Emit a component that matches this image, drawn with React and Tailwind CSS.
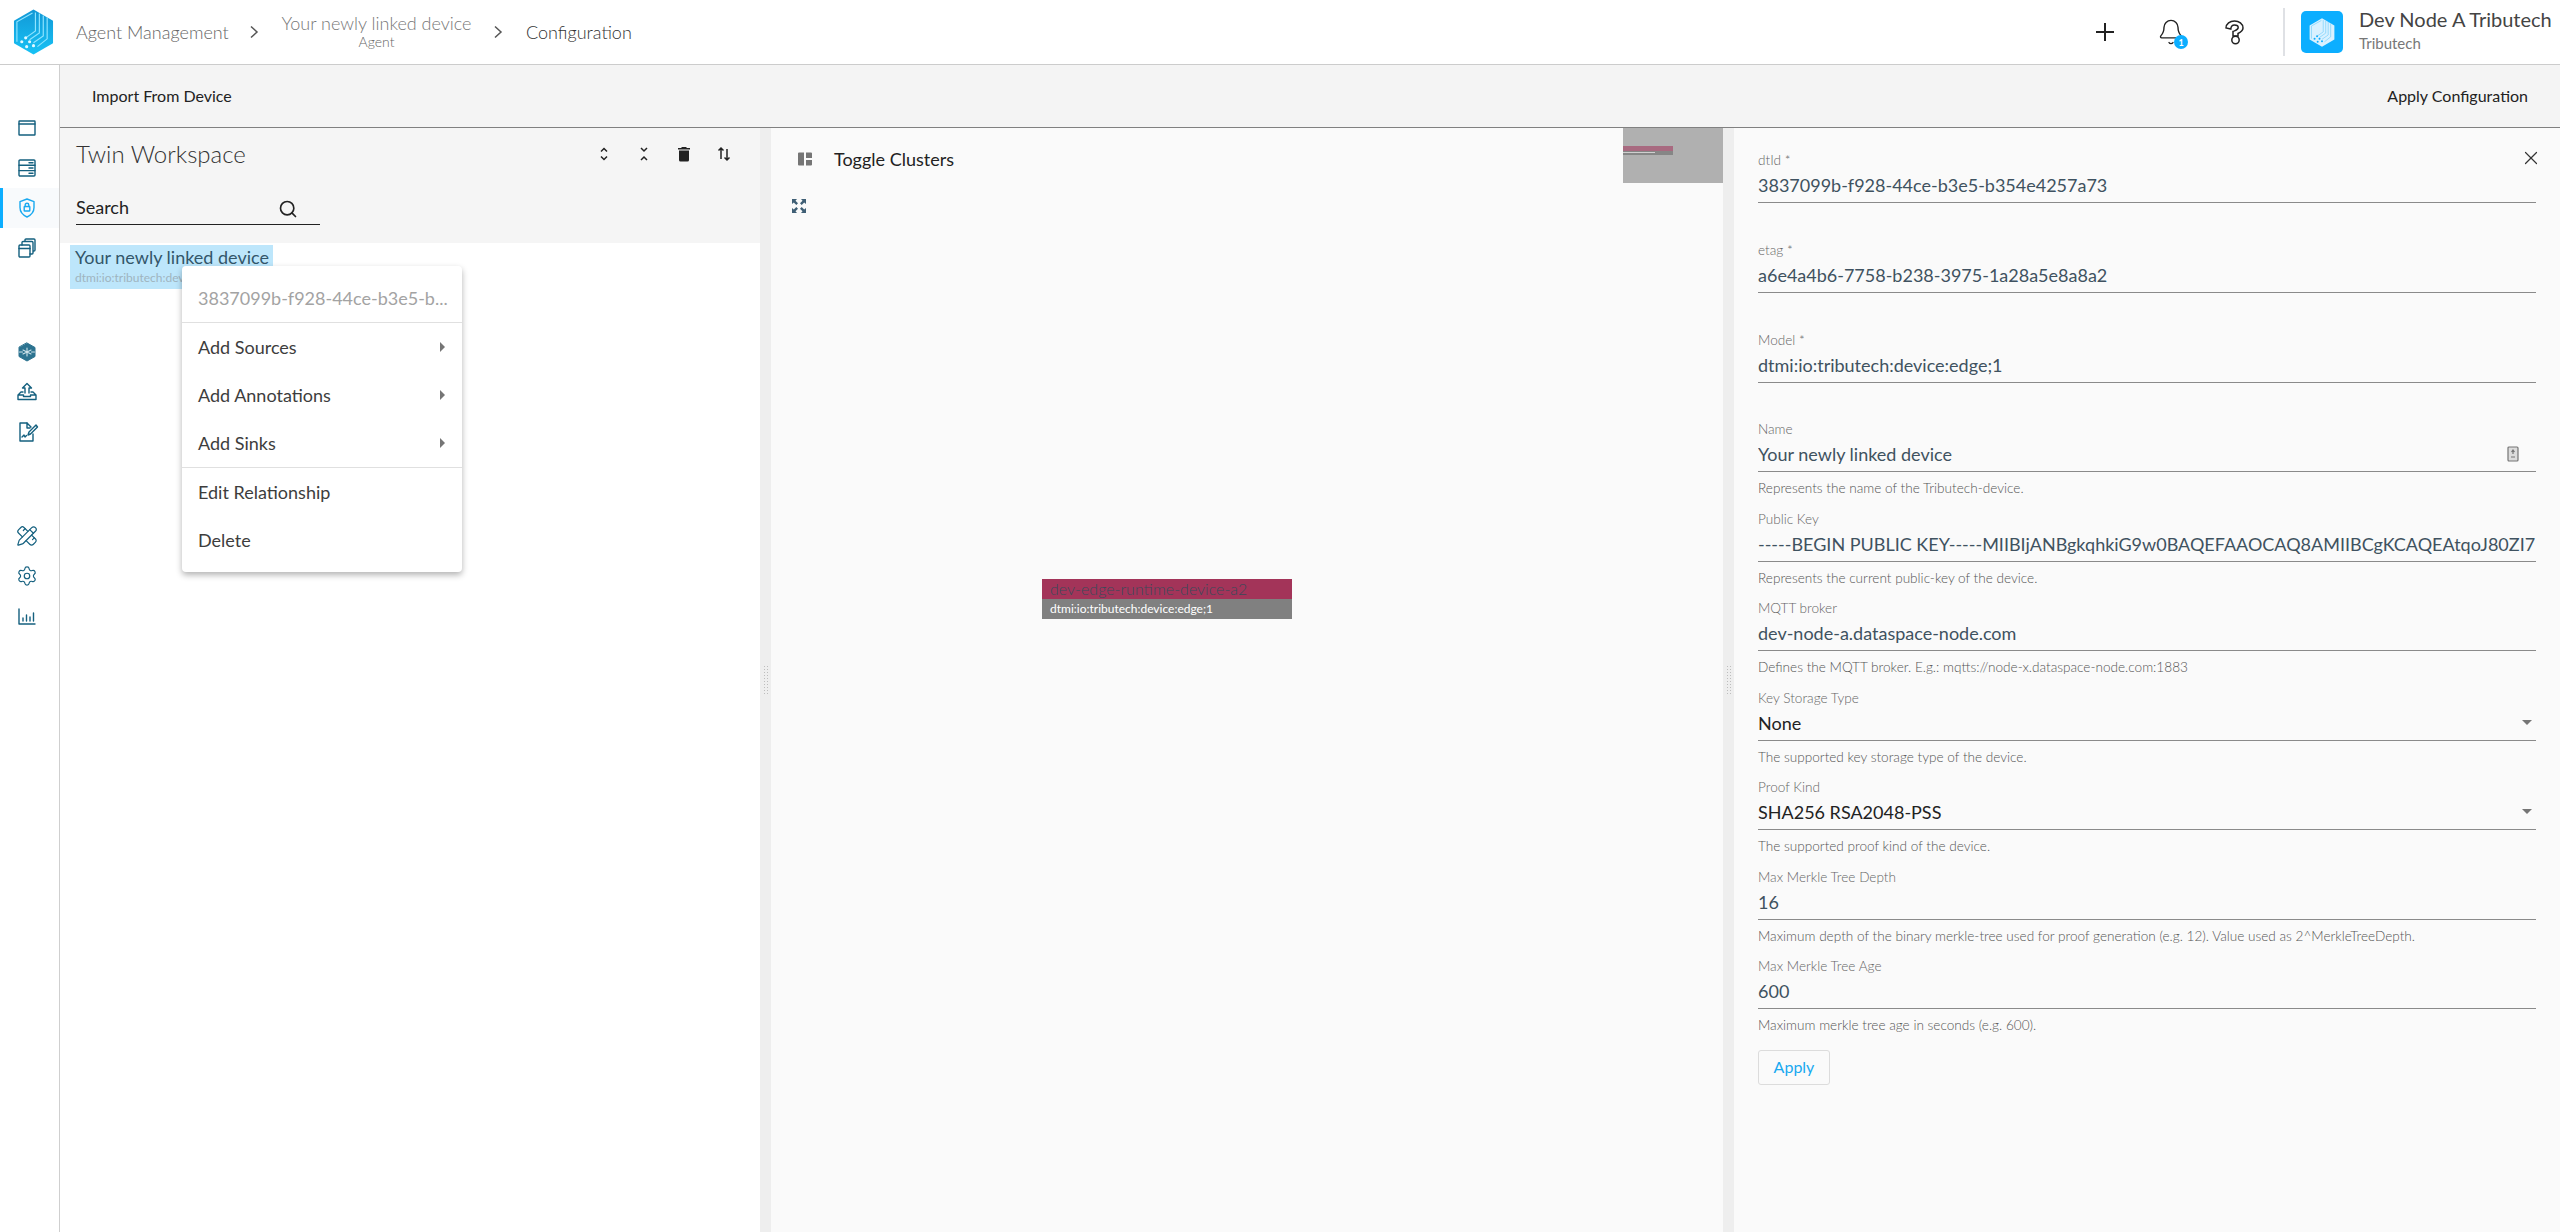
import React from "react";
import { PencilRuler, Settings, Bell, X, Search } from "lucide-react";

const S = (p) => <svg width="24" height="24" viewBox="0 0 24 24" fill="none" stroke="currentColor" strokeWidth="1.4" strokeLinecap="round" strokeLinejoin="round" {...p} />;

const Logo = ({ light }) => (
  <svg viewBox="0 0 42 46" className={light ? "w-[26px] h-[29px]" : "w-[41px] h-[46px]"}>
    <defs>
      <linearGradient id="lg" x1="0" y1="0" x2="0" y2="1">
        <stop offset="0" stopColor="#1298d6" />
        <stop offset="1" stopColor="#18c2f5" />
      </linearGradient>
    </defs>
    <path d="M21 0 41 11.500V34.500L21 46 1 34.500V11.500Z" fill={light ? "#d9f1ff" : "url(#lg)"} />
    <g fill="none" stroke={light ? "#7fd2fb" : "#8fe4ff"} strokeWidth="1.2">
      <path d="M20 3.500 4 12.500V33" />
      <path d="M23 3V22L13 29" />
      <path d="M27 4V24L17 31" />
      <path d="M31 6V27L21 34" />
      <path d="M35 8V30L25 38" />
    </g>
    <g fill={light ? "#0caeff" : "#e4f8ff"}>
      <circle cx="13" cy="29" r="1.600" />
      <circle cx="17" cy="33" r="1.600" />
      <circle cx="9" cy="33" r="1.600" />
      <circle cx="21" cy="37" r="1.600" />
      <circle cx="14" cy="38" r="1.600" />
    </g>
  </svg>
);

const navGroups = [
  [
    <S key="a"><rect x="4" y="5" width="16" height="14" rx="0.5" /><path d="M4 8h16" /></S>,
    <S key="b"><rect x="4" y="4" width="16" height="16" rx="1" /><path d="M4 9.300h16M4 14.600h16M14 6.700h4M14 12h4M14 17.300h4" /></S>,
    <S key="c"><path d="M12 3l7 2.600v6c0 4.400-3 7.600-7 9.400-4-1.800-7-5-7-9.400v-6z" /><rect x="9.200" y="10.500" width="5.600" height="4.500" rx="0.600" /><path d="M10.200 10.500V9a1.800 1.800 0 0 1 3.600 0v1.500" /></S>,
    <S key="d"><rect x="4" y="9" width="11" height="12" rx="1" /><path d="M4 12.500h11M7 9V6.500a1 1 0 0 1 1-1h9a1 1 0 0 1 1 1V17a1 1 0 0 1-1 1h-2M10 5.500V4a1 1 0 0 1 1-1h8a1 1 0 0 1 1 1v10a1 1 0 0 1-1 1h-1" /></S>,
  ],
  [
    <S key="e" fill="#2c7390" stroke="#2c7390" strokeWidth="1"><path d="M12 3l8 4.500v9L12 21l-8-4.500v-9z" /><path d="M12 8v8M8 10l8 4M16 10l-8 4M4.500 12h3M16.500 12h3" stroke="#cfe3ea" strokeWidth="1.100" /></S>,
    <S key="f"><path d="M3 15v4.500h18V15l-3-3h-2M8 12H6l-3 3h5.500v1.500h7V15H21" /><path d="M10 13V8H7.500L12 3.500 16.500 8H14v5" /></S>,
    <S key="g"><path d="M12 3H5v18h13v-7" /><path d="M12 3v5h3M12 3l4 4" /><path d="M7 17l2-2 1 2 1.500-1.500" /><path d="M13 15l1-3 7-7 1.500 2-7 7z" /></S>,
  ],
  [
    <PencilRuler key="h" size={22} strokeWidth={1.3} />,
    <Settings key="i" size={22} strokeWidth={1.3} />,
    <S key="j"><path d="M4 5v15h16M8 17v-3M11.500 17v-6M15 17v-4M18.500 17V9" /></S>,
  ],
];

function Sidebar() {
  return (
    <aside className="w-[60px] shrink-0 border-r border-[#cfcfcf] pt-[43px] text-[#14607f] flex flex-col gap-[64px]">
      {navGroups.map((g, i) => (
        <div key={i} className="flex flex-col">
          {g.map((ic, j) => {
            const active = i === 0 && j === 2;
            return (
              <div key={j} className={"h-[40px] flex items-center justify-center " + (active ? "bg-[#f8fafc] border-l-[3px] border-[#0caeff] text-[#19a9f0] pr-[8px]" : "pr-[5px]")}>
                {ic}
              </div>
            );
          })}
        </div>
      ))}
    </aside>
  );
}

const Chevron = () => (
  <svg width="10" height="14" viewBox="0 0 10 14" fill="none" stroke="#555" strokeWidth="1.500"><path d="M2 1.500 8 7 2 12.500" /></svg>
);

function Header() {
  return (
    <header className="h-[65px] shrink-0 border-b border-[#cccccc] flex items-center">
      <div className="w-[76px] pl-[13px] shrink-0 flex items-center"><Logo /></div>
      <span className="text-[18px] font-light text-[#666] w-[173px]">Agent Management</span>
      <Chevron />
      <div className="w-[187px] ml-[24px] flex flex-col items-center text-center">
        <span className="text-[18px] font-light text-[#777] leading-[20px] -mt-[2px] whitespace-nowrap">Your newly linked device</span>
        <span className="text-[14px] font-light text-[#666] leading-[16px] mt-[1px]">Agent</span>
      </div>
      <div className="ml-[23px]"><Chevron /></div>
      <span className="ml-[23px] text-[18px] font-light text-[#333]">Configuration</span>
      <div className="ml-auto flex items-center h-full">
        <svg width="20" height="20" viewBox="0 0 20 20" fill="none" stroke="#222" strokeWidth="2" className="mr-[42px]"><path d="M10 1v18M1 10h18" /></svg>
        <div className="relative mr-[40px] w-[28px] h-[28px]">
          <Bell size={28} strokeWidth={1.2} className="text-[#222]" />
          <span className="absolute left-[17px] top-[17px] w-[14px] h-[14px] rounded-full bg-[#0caeff] text-white text-[9px] font-bold flex items-center justify-center leading-none">1</span>
        </div>
        <svg width="19" height="25" viewBox="0 0 19 25" fill="none" stroke="#222" strokeWidth="1.500" className="mr-[39px]">
          <path d="M1 8C1 3.500 5 1 9.500 1S18 3.500 18 8c0 3-3 4.500-5 5.500V16H8v-4.500c2-1 5.200-1.500 5.200-4S11.500 5 9.500 5 6 6 5.800 9z" />
          <circle cx="10.500" cy="20" r="3.700" />
        </svg>
        <div className="w-[2px] h-[48px] bg-[#dfe1e5] mr-[16px]" />
        <div className="w-[42px] h-[42px] rounded-[5px] bg-[#0caeff] flex items-center justify-center mr-[16px]"><Logo light /></div>
        <div className="w-[201px] flex flex-col pb-[5px]">
          <span className="text-[20px] leading-[24px] text-[#444] whitespace-nowrap">Dev Node A Tributech</span>
          <span className="text-[15px] leading-[18px] mt-[3px] text-[#777]">Tributech</span>
        </div>
      </div>
    </header>
  );
}

const MenuItem = ({ children, arrow, muted }) => (
  <div className={"h-[48px] px-[16px] flex items-center justify-between text-[18px] " + (muted ? "text-[#a3a3a3]" : "text-[#3d3d3d]")}>
    <span className="whitespace-nowrap">{children}</span>
    {arrow && <span className="w-0 h-0 border-y-[5px] border-y-transparent border-l-[5px] border-l-[#757575] mr-[1px]" />}
  </div>
);

function LeftPanel() {
  return (
    <section className="w-[700px] shrink-0 bg-white relative flex flex-col">
      <div className="h-[115px] bg-[#f5f5f5] pl-[16px] pr-[28px] shrink-0">
        <div className="flex items-center h-[52px]">
          <h2 className="text-[24px] font-light text-[#333] leading-none flex-1">Twin Workspace</h2>
          <div className="flex items-center gap-[24px] text-[#222]">
            <svg width="16" height="16" viewBox="0 0 16 16" fill="none" stroke="currentColor" strokeWidth="1.500"><path d="M5 5.500 8 2.500l3 3M5 10.500l3 3 3-3" /></svg>
            <svg width="16" height="16" viewBox="0 0 16 16" fill="none" stroke="currentColor" strokeWidth="1.500"><path d="M5 2l3 3 3-3M5 14l3-3 3 3" /></svg>
            <svg width="16" height="16" viewBox="0 0 16 16" fill="currentColor"><path d="M6 1h4l1 1h3v1.500H2V2h3zM3 4.500h10V14a1.500 1.500 0 0 1-1.500 1.500h-7A1.500 1.500 0 0 1 3 14z" /></svg>
            <svg width="16" height="16" viewBox="0 0 16 16" fill="none" stroke="currentColor" strokeWidth="1.500"><path d="M5 13V2M2.500 4.500 5 2l2.500 2.500M11 3v11M8.500 11.500 11 14l2.500-2.500" /></svg>
          </div>
        </div>
        <div className="w-[244px] h-[40px] mt-[5px] pt-[5px] border-b border-[#222] flex items-center justify-between pr-[22px]">
          <span className="text-[18px] text-[#222]">Search</span>
          <Search size={20} strokeWidth={2} className="text-[#222] mt-[3px]" />
        </div>
      </div>
      <div className="ml-[10px] mt-[2px] w-[203px] h-[44px] bg-[#bde6fb] px-[5px] overflow-hidden">
        <div className="text-[18px] text-[#33566a] leading-[24px] whitespace-nowrap">Your newly linked device</div>
        <div className="text-[12px] text-[#9fb4bf] leading-[14px] mt-[2px] whitespace-nowrap">dtmi:io:tributech:device:edge;1</div>
      </div>
      <div className="absolute left-[122px] top-[138px] w-[280px] bg-white rounded-[4px] py-[8px] shadow-[0_3px_6px_rgba(0,0,0,0.3)]">
        <MenuItem muted>3837099b-f928-44ce-b3e5-b...</MenuItem>
        <div className="h-px bg-[#e0e0e0]" />
        <MenuItem arrow>Add Sources</MenuItem>
        <MenuItem arrow>Add Annotations</MenuItem>
        <MenuItem arrow>Add Sinks</MenuItem>
        <div className="h-px bg-[#e0e0e0]" />
        <MenuItem>Edit Relationship</MenuItem>
        <MenuItem>Delete</MenuItem>
      </div>
    </section>
  );
}

const Splitter = () => (
  <div className="w-[11px] shrink-0 bg-[#eeeeee] flex items-center justify-center">
    <div className="w-[5px] h-[30px] bg-[radial-gradient(#bdbdbd_1px,transparent_1px)] bg-[length:3px_3px]" />
  </div>
);

function CenterPanel() {
  return (
    <section className="flex-1 bg-[#fafafa] relative">
      <div className="flex items-center h-[62px] pl-[26px] gap-[21px]">
        <svg width="16" height="16" viewBox="0 0 16 16" fill="#757575"><path d="M2 1.500h5v13H2a1 1 0 0 1-1-1v-11a1 1 0 0 1 1-1zM9 1.500h5a1 1 0 0 1 1 1V7H9zM9 9h6v4.500a1 1 0 0 1-1 1H9z" /></svg>
        <span className="text-[18px] text-[#222]">Toggle Clusters</span>
      </div>
      <div className="pl-[20px] mt-[8px]">
        <svg width="16" height="16" viewBox="0 0 16 16" fill="#3f5f75"><path d="M1 1h5L4.500 2.800 7 5.300 5.300 7 2.800 4.500 1 6zM15 1v5l-1.800-1.500L10.700 7 9 5.300l2.500-2.500L10 1zM1 15v-5l1.800 1.500L5.300 9 7 10.700l-2.500 2.500L6 15zM15 15h-5l1.500-1.800L9 10.700 10.700 9l2.500 2.500L15 10z" /></svg>
      </div>
      <div className="absolute right-0 top-0 w-[100px] h-[55px] bg-[#b0b0b0]">
        <div className="absolute left-0 top-[18px] w-[50px] h-[5px] bg-[#a86a80]" />
        <div className="absolute left-0 top-[23px] w-[50px] h-[4px] bg-[#868686]" />
        <div className="absolute left-0 top-[24px] w-[32px] h-[1px] bg-[#cfcfcf]" />
      </div>
      <div className="absolute left-[271px] top-[451px] w-[250px]">
        <div className="h-[20px] bg-[#a33459] pl-[8px] text-[16px] leading-[20px] font-light text-[#3a4a5a] whitespace-nowrap">dev-edge-runtime-device-a2</div>
        <div className="h-[20px] bg-[#808080] pl-[8px] text-[12px] leading-[20px] text-white whitespace-nowrap">dtmi:io:tributech:device:edge;1</div>
      </div>
    </section>
  );
}

const Caret = () => <span className="absolute right-[4px] top-[14px] w-0 h-0 border-x-[5px] border-x-transparent border-t-[5px] border-t-[#757575]" />;

const fields = [
  { l: "dtId *", v: "3837099b-f928-44ce-b3e5-b354e4257a73", mb: "mb-[39px]" },
  { l: "etag *", v: "a6e4a4b6-7758-b238-3975-1a28a5e8a8a2", mb: "mb-[39px]" },
  { l: "Model *", v: "dtmi:io:tributech:device:edge;1", mb: "mb-[38px]" },
  { l: "Name", v: "Your newly linked device", h: "Represents the name of the Tributech-device.", icon: true },
  { l: "Public Key", v: "-----BEGIN PUBLIC KEY-----MIIBIjANBgkqhkiG9w0BAQEFAAOCAQ8AMIIBCgKCAQEAtqoJ80ZI7", h: "Represents the current public-key of the device." },
  { l: "MQTT broker", v: "dev-node-a.dataspace-node.com", h: "Defines the MQTT broker. E.g.: mqtts://node-x.dataspace-node.com:1883" },
  { l: "Key Storage Type", v: "None", h: "The supported key storage type of the device.", sel: true },
  { l: "Proof Kind", v: "SHA256 RSA2048-PSS", h: "The supported proof kind of the device.", sel: true },
  { l: "Max Merkle Tree Depth", v: "16", h: "Maximum depth of the binary merkle-tree used for proof generation (e.g. 12). Value used as 2^MerkleTreeDepth." },
  { l: "Max Merkle Tree Age", v: "600", h: "Maximum merkle tree age in seconds (e.g. 600)." },
];

function Field({ f }) {
  return (
    <div className={f.mb || ""}>
      <div className="text-[13.6px] leading-[16px] font-light text-[#666] whitespace-nowrap">{f.l}</div>
      <div className={"relative h-[35px] border-b border-[#8a8a8a] text-[18px] leading-[34px] overflow-hidden whitespace-nowrap " + (f.sel ? "text-[#222]" : "text-[#3f5260]")}>
        {f.v}
        {f.sel && <Caret />}
        {f.icon && (
          <svg width="12" height="16" viewBox="0 0 12 16" className="absolute right-[17px] top-[9px]" fill="none" stroke="#757575" strokeWidth="1.200">
            <rect x="1" y="1" width="10" height="14" rx="1" fill="#dcdcdc" />
            <path d="M6 4v4M4.500 6 6 4l1.500 2M4 11h4" />
          </svg>
        )}
      </div>
      {f.h && <div className="text-[13.6px] leading-[16px] mt-[8px] font-light text-[#555] whitespace-nowrap mb-[14.5px]">{f.h}</div>}
    </div>
  );
}

function RightPanel() {
  return (
    <section className="w-[826px] shrink-0 bg-[#fafafa] relative pl-[24px] pr-[24px] pt-[24px]">
      <X size={22} strokeWidth={1.3} className="absolute right-[18px] top-[19px] text-[#333]" />
      {fields.map((f) => <Field key={f.l} f={f} />)}
      <button className="w-[72px] h-[35px] border border-[#dcdcdc] rounded-[3px] text-[16px] text-[#19a9f0] bg-transparent mt-[2px]">Apply</button>
    </section>
  );
}

export default function App() {
  return (
    <div className="w-[2560px] h-[1232px] overflow-hidden bg-white flex flex-col font-['Lato',sans-serif]">
      <Header />
      <div className="flex flex-1 min-h-0">
        <Sidebar />
        <main className="flex-1 flex flex-col min-w-0">
          <div className="h-[63px] shrink-0 bg-[#f4f4f4] border-b border-[#808080] flex items-center justify-between pl-[32px] pr-[32px] text-[16px] text-[#222]">
            <span>Import From Device</span>
            <span>Apply Configuration</span>
          </div>
          <div className="flex flex-1 min-h-0">
            <LeftPanel />
            <Splitter />
            <CenterPanel />
            <Splitter />
            <RightPanel />
          </div>
        </main>
      </div>
    </div>
  );
}
